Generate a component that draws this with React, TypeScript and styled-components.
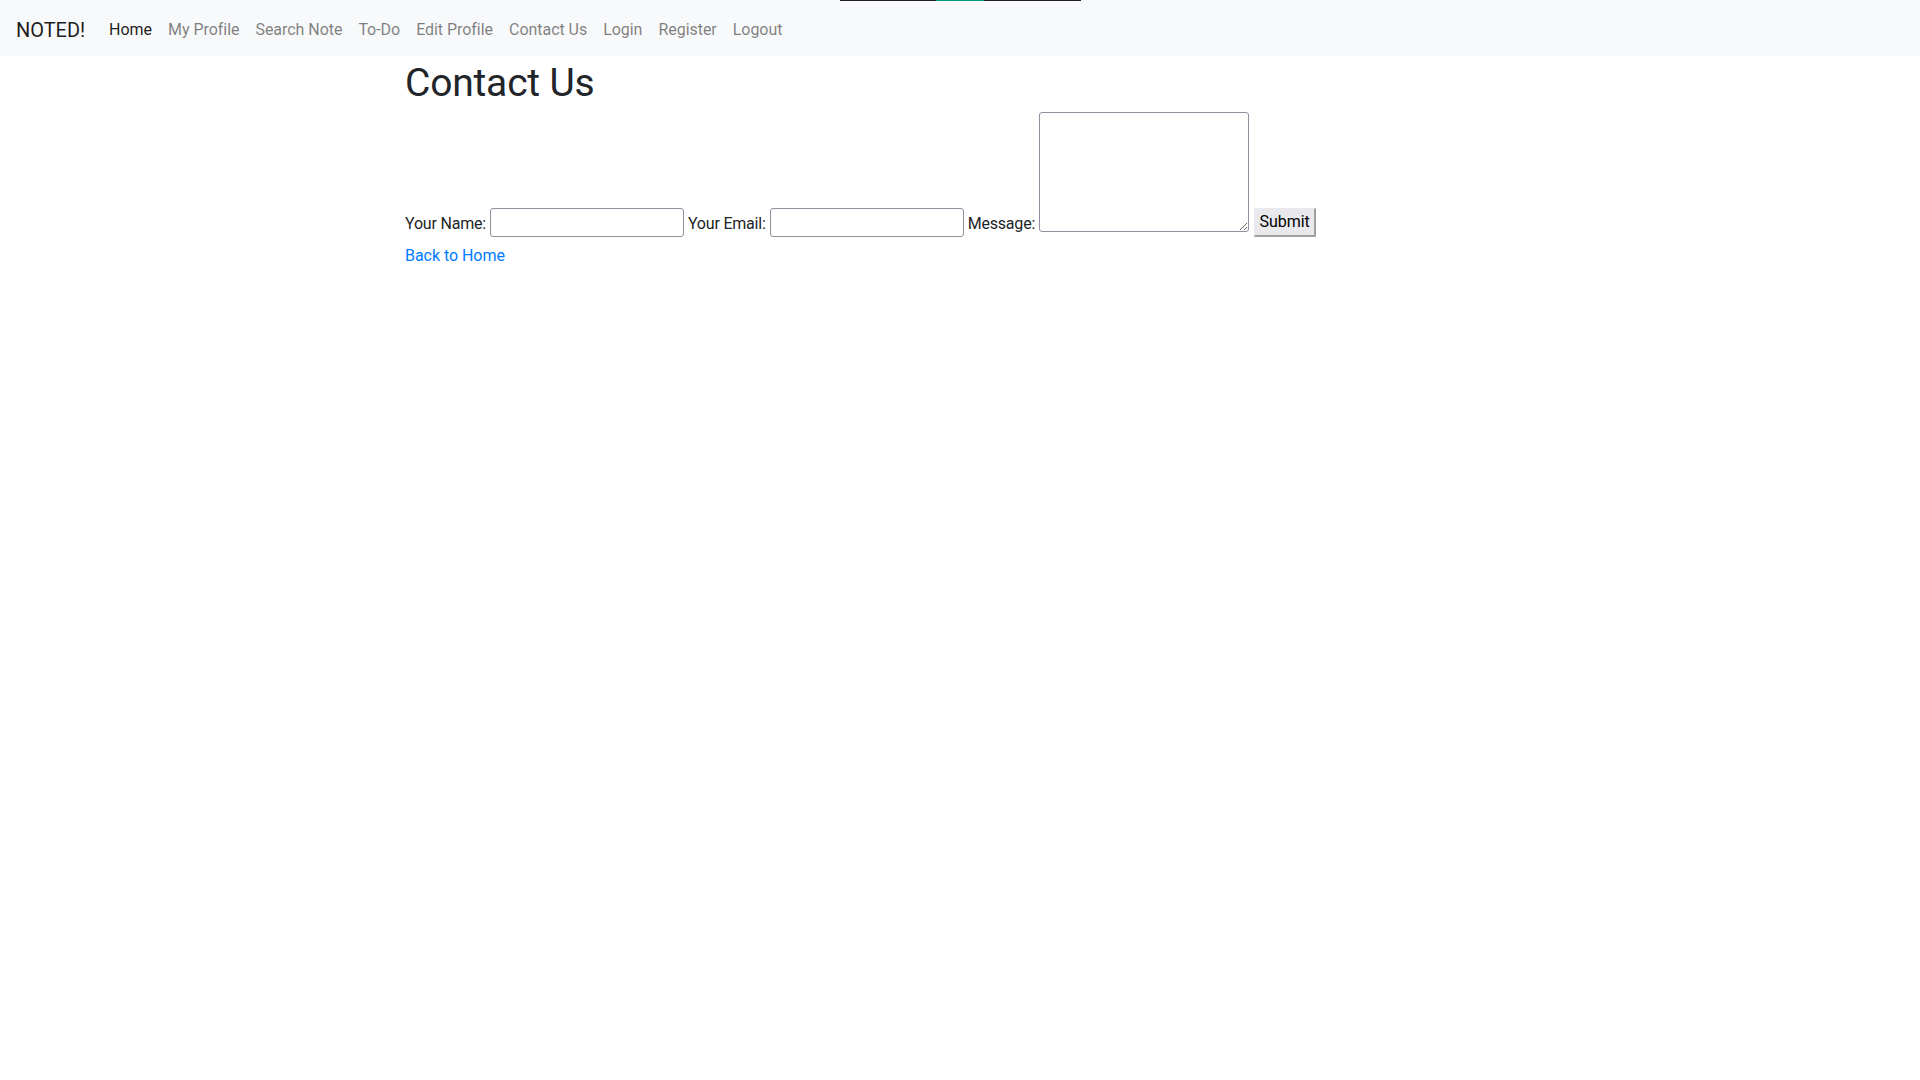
import React from "react";
import styled, { createGlobalStyle } from "styled-components";

const GlobalStyle = createGlobalStyle`
  html, body { margin: 0; padding: 0; background: #ffffff; }
  body {
    font-family: "Segoe UI", Roboto, "Noto Sans", "Liberation Sans", sans-serif;
    font-size: 16px;
    line-height: 1.5;
    letter-spacing: -0.04px;
    color: #212529;
  }
  *, *::before, *::after { box-sizing: border-box; }
`;

const TopBar = styled.div`
  position: absolute;
  top: 0;
  left: 840px;
  width: 241px;
  height: 1px;
  display: flex;
  z-index: 10;
`;

const TopSeg = styled.div<{ $w: number; $c: string }>`
  width: ${(p) => p.$w}px;
  height: 100%;
  background: ${(p) => p.$c};
`;

const Navbar = styled.nav`
  display: flex;
  align-items: center;
  height: 56px;
  padding: 8px 16px;
  background: #f8f9fa;
`;

const Brand = styled.a`
  font-size: 20px;
  line-height: 30px;
  padding: 7px 0 3px;
  margin-right: 16px;
  color: rgba(0, 0, 0, 0.9);
  text-decoration: none;
  white-space: nowrap;
`;

const NavList = styled.ul`
  display: flex;
  list-style: none;
  margin: 0;
  padding: 0;
`;

const NavLink = styled.a<{ $active?: boolean }>`
  display: block;
  padding: 10px 8px 6px;
  line-height: 24px;
  color: ${(p) => (p.$active ? "rgba(0,0,0,0.9)" : "rgba(0,0,0,0.5)")};
  text-decoration: none;
`;

const Container = styled.main`
  width: 1140px;
  margin: 0 auto;
  padding: 0 15px;
`;

const Title = styled.h1`
  font-size: 39px;
  font-weight: 400;
  line-height: 1.2;
  letter-spacing: -0.2px;
  padding-top: 4px;
  margin: 0 0 5px;
`;

const Form = styled.form`
  display: flex;
  align-items: flex-end;
  gap: 4px;
  margin-top: 1px;
`;

const Label = styled.label`
  line-height: 24px;
  margin-bottom: 1px;
  letter-spacing: -0.2px;
  white-space: nowrap;
`;

const TextInput = styled.input`
  width: 194px;
  height: 29px;
  margin: 0;
  padding: 2px 4px;
  border: 1px solid #8f8f9d;
  border-radius: 3px;
  background: #fff;
  font: inherit;
`;

const MessageArea = styled.textarea`
  width: 210px;
  height: 120px;
  margin: 0 0 5px;
  padding: 2px;
  border: 1px solid #8f8f9d;
  border-radius: 3px;
  font: inherit;
  resize: both;
`;

const SubmitButton = styled.button`
  height: 29px;
  width: 62px;
  margin: 0 0 0 1px;
  padding: 0 4px;
  font: inherit;
  color: #000;
  background: #e9e9ed;
  border: 1px solid #e9e9ed;
  border-right: 2px solid #a0a0a0;
  border-bottom: 2px solid #a0a0a0;
  border-radius: 0;
`;

const BackLink = styled.a`
  display: inline-block;
  margin-top: 7px;
  color: #007bff;
  text-decoration: none;
`;

const navItems = ["Home", "My Profile", "Search Note", "To-Do", "Edit Profile", "Contact Us", "Login", "Register", "Logout"];

export default function App() {
  return (
    <>
      <GlobalStyle />
      <TopBar>
        <TopSeg $w={96} $c="#1f1f22" />
        <TopSeg $w={48} $c="#00977f" />
        <TopSeg $w={97} $c="#1f1f22" />
      </TopBar>
      <Navbar>
        <Brand href="#">NOTED!</Brand>
        <NavList>
          {navItems.map((item, i) => (
            <li key={item}>
              <NavLink href="#" $active={i === 0}>{item}</NavLink>
            </li>
          ))}
        </NavList>
      </Navbar>
      <Container>
        <Title>Contact Us</Title>
        <Form onSubmit={(e) => e.preventDefault()}>
          <Label htmlFor="name">Your Name:</Label>
          <TextInput id="name" type="text" />
          <Label htmlFor="email">Your Email:</Label>
          <TextInput id="email" type="email" />
          <Label htmlFor="message">Message:</Label>
          <MessageArea id="message" />
          <SubmitButton type="submit">Submit</SubmitButton>
        </Form>
        <BackLink href="#">Back to Home</BackLink>
      </Container>
    </>
  );
}
